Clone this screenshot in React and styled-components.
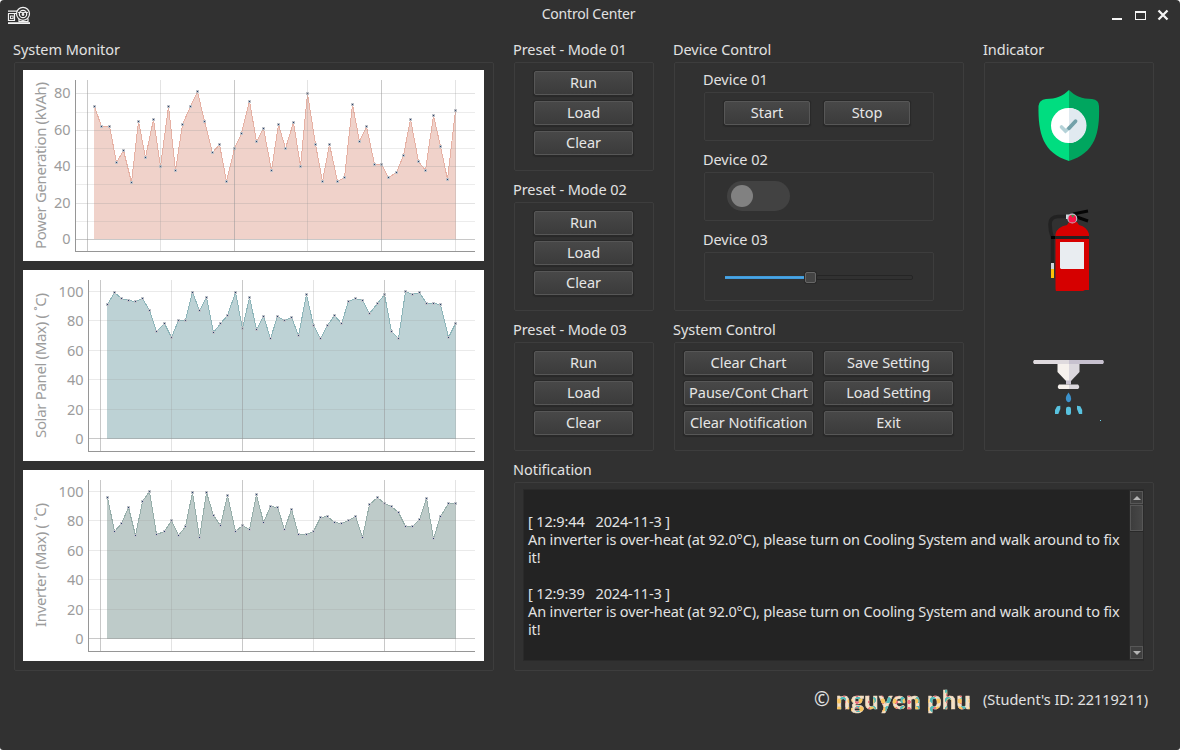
import React from "react";
import styled, { createGlobalStyle } from "styled-components";

const GlobalStyle = createGlobalStyle`
  * { box-sizing: border-box; }
  body {
    margin: 0;
    background: #fff;
    overflow: hidden;
    font-family: "Noto Sans", "Open Sans", sans-serif;
    font-size: 14.5px;
    color: #e2e2e2;
  }
`;

const Window = styled.div`
  width: 1180px;
  height: 750px;
  background: #313131;
  border-radius: 4px 4px 3px 3px;
  display: flex;
  flex-direction: column;
`;

const TitleBar = styled.header`
  height: 31px;
  flex: none;
  display: grid;
  grid-template-columns: 60px 1fr 60px;
  padding: 0 10px 0 7px;
`;

const AppIcon = styled.svg`
  width: 24px;
  height: 20px;
  margin-top: 6px;
`;

const Title = styled.div`
  text-align: center;
  line-height: 28px;
  font-size: 14px;
  letter-spacing: -0.2px;
`;

const WindowButtons = styled.svg`
  width: 60px;
  height: 31px;
`;

const Main = styled.main`
  display: grid;
  grid-template-columns: 480px 640px;
  column-gap: 20px;
  padding: 0 0 0 14px;
`;

const Column = styled.div`
  display: flex;
  flex-direction: column;
`;

const TopRow = styled.div`
  display: grid;
  grid-template-columns: 140px 290px 170px;
  column-gap: 20px;
`;

const Group = styled.section`
  display: flex;
  flex-direction: column;
`;

const GroupLabel = styled.h2`
  margin: 0 0 0 -1px;
  height: ${(p) => (p.$tight ? 29 : 31)}px;
  padding-top: ${(p) => (p.$tight ? 4 : 6)}px;
  line-height: 24px;
  font-size: 14.5px;
  font-weight: 400;
  white-space: nowrap;
  letter-spacing: -0.05px;
`;

const GroupBox = styled.div`
  height: ${(p) => p.$h}px;
  border: 1px solid #3d3d3d;
  border-radius: 2px;
  padding: ${(p) => p.$pad || "0"};
`;

const ChartStack = styled(GroupBox)`
  display: flex;
  flex-direction: column;
  gap: 9px;
`;

const ChartSvg = styled.svg`
  display: block;
  width: 461px;
  height: 191px;
  background: #fff;
  font-size: 15px;
  fill: #9c9c9c;
`;

const ButtonStack = styled(GroupBox)`
  display: grid;
  grid-template-columns: ${(p) => p.$cols};
  grid-auto-rows: 24px;
  gap: 6px ${(p) => p.$gap || 0}px;
  align-content: start;
`;

const Button = styled.button`
  padding: 0 0 2px;
  border: 1px solid #575757;
  border-radius: 2px;
  background: linear-gradient(#484848, #3b3b3b);
  box-shadow: 0 0 0 1px #292929, 0 1px 1px 1px #292929;
  color: #e6e6e6;
  font: inherit;
  line-height: 20px;
  white-space: nowrap;
  letter-spacing: -0.06px;
`;

const Track = styled.div`
  width: 63px;
  height: 30px;
  border-radius: 15px;
  background: #424242;
  padding: 4px;
`;

const Knob = styled.div`
  width: 22px;
  height: 22px;
  border-radius: 50%;
  background: #818181;
`;

const Slider = styled.div`
  display: flex;
  align-items: center;
  height: 11px;
`;

const SliderFill = styled.div`
  width: 80px;
  height: 3px;
  background: #4ba6e4;
  border-top: 1px solid #419bdb;
  border-bottom: 1px solid #419bdb;
`;

const SliderHandle = styled.div`
  width: 11px;
  height: 11px;
  border: 1px solid #676767;
  border-radius: 2px;
  background: #444;
  box-shadow: 0 0 0 1px #292929;
`;

const SliderRest = styled.div`
  width: 97px;
  height: 5px;
  border: 1px solid #252525;
  border-radius: 2px;
`;

const IndicatorBox = styled(GroupBox)`
  svg { display: block; width: 168px; height: 387px; }
`;

const LogFrame = styled.div`
  display: flex;
  height: 172px;
  background: #232323;
  border: 1px solid #2a2a2a;
`;

const LogText = styled.div`
  flex: 1;
  min-width: 0;
  overflow: hidden;
  padding: 4px 0 0 4px;
`;

const Line = styled.div`
  height: 18px;
  line-height: 18px;
  white-space: pre;
  letter-spacing: -0.135px;
  margin-top: ${(p) => p.$up || 0}px;
`;

const Scroll = styled.div`
  width: 14px;
  flex: none;
  display: flex;
  flex-direction: column;
  background: #383838;
  border: 1px solid #292929;
  border-right: 0;
`;

const Arrow = styled.div`
  height: 13px;
  border: 1px solid #575757;
  background: #3f3f3f;
  display: flex;
  align-items: center;
  justify-content: center;
  &::after {
    content: "";
    border: 4px solid transparent;
    border-top-width: ${(p) => (p.$up ? 0 : 4)}px;
    border-bottom-width: ${(p) => (p.$up ? 4 : 0)}px;
    border-top-color: ${(p) => (p.$up ? "transparent" : "#b4b4b4")};
    border-bottom-color: ${(p) => (p.$up ? "#b4b4b4" : "transparent")};
  }
`;

const Thumb = styled.div`
  height: 26px;
  margin: 1px 0 auto;
  border: 1px solid #575757;
  background: linear-gradient(90deg, #3d3d3d, #474747);
  box-shadow: 0 1px 0 #292929;
`;

const Footer = styled.footer`
  display: flex;
  align-items: center;
  height: 55px;
  padding-left: 814px;
`;

const Copyright = styled.span`
  font-size: 19px;
  width: 22px;
`;

const Signature = styled.span`
  width: 147px;
  font-family: Lato, sans-serif;
  font-weight: 900;
  font-size: 25px;
  line-height: 34px;
  white-space: pre;
  letter-spacing: 0.45px;
  color: transparent;
  -webkit-text-stroke: 0.6px transparent;
  background:
    radial-gradient(circle at 3px 3px, #fbc55e 2.2px, transparent 2.8px) 0 0 / 11px 8px,
    radial-gradient(circle at 3px 3px, #ee6f7d 1.6px, transparent 2.2px) 5px 3px / 13px 7px,
    radial-gradient(circle at 4px 4px, #4fb9b8 2.8px, transparent 3.4px) 3px 5px / 15px 9px,
    #f3dfc6;
  -webkit-background-clip: text;
  background-clip: text;
`;

const StudentId = styled.span`
  font-size: 14.5px;
  white-space: nowrap;
  letter-spacing: -0.02px;
`;

const charts = [
  {
    label: "Power Generation (kVAh)", top: 12, length: 167, axis: 52.5, x0: 64.05, step: 7.362,
    zero: 169.4, unit: 1.82, bottom: 181.5, major: [80, 60, 40, 20, 0], minor: [70, 50, 30, 10],
    fill: "#f0d2ca", line: "#e6b1a4",
    data: [73, 62, 62, 42, 49, 31, 65, 45, 66, 40, 73, 38, 63, 73, 81, 65, 48, 52, 32, 50, 58, 76, 54, 61, 38, 63, 50, 64, 40, 80, 52, 32, 52, 32, 34, 74, 54, 62, 41, 41, 34, 37, 46, 66, 43, 38, 68, 51, 33, 71],
  },
  {
    label: "Solar Panel (Max) ( ˚C)", top: 23, length: 145, axis: 65.5, x0: 77.1, step: 7.1,
    zero: 168.5, unit: 1.47, bottom: 181.5, major: [100, 80, 60, 40, 20, 0], minor: [],
    fill: "#bdd2d5", line: "#8db5b9",
    data: [91, 99, 95, 94, 93, 95, 87, 73, 78, 69, 80, 80, 99, 87, 96, 72, 78, 84, 99, 75, 96, 74, 83, 68, 83, 80, 82, 70, 98, 77, 68, 77, 84, 78, 93, 95, 94, 85, 92, 98, 73, 68, 100, 98, 99, 92, 92, 91, 69, 78],
  },
  {
    label: "Inverter (Max) ( ˚C)", top: 33, length: 124, axis: 65.5, x0: 77.1, step: 7.1,
    zero: 168.5, unit: 1.47, bottom: 181.5, major: [100, 80, 60, 40, 20, 0], minor: [],
    fill: "#becbc9", line: "#96aeaa",
    data: [96, 73, 78, 89, 70, 93, 100, 71, 73, 80, 70, 76, 99, 69, 99, 84, 77, 97, 73, 77, 74, 98, 79, 90, 89, 74, 88, 71, 71, 73, 82, 83, 79, 78, 80, 83, 69, 91, 96, 92, 90, 86, 76, 76, 81, 95, 68, 83, 92, 92],
  },
];

function Chart({ c }) {
  const snap = (v) => Math.floor(v) + 0.5;
  const px = (i) => snap(c.x0 + c.step * i);
  const py = (v) => snap(c.zero - c.unit * v);
  const pts = c.data.map((v, i) => [px(i + 1), py(v)]);
  const path = pts.map((p) => p.join(",")).join(" ");
  const left = pts[0][0] - 0.5;
  return (
    <ChartSvg viewBox="0 0 461 191">
      <polygon points={`${left},${c.zero} ${left},${pts[0][1]} ${path} ${pts[49][0]},${c.zero}`} fill={c.fill} shapeRendering="crispEdges" />
      <polyline points={path} fill="none" stroke={c.line} shapeRendering="crispEdges" />
      {pts.map(([x, y], i) => (
        <g key={i} shapeRendering="crispEdges">
          <rect x={x - 1.5} y={y - 1.5} width="3" height="3" fill="#bfc2c8" />
          <rect x={x - 0.5} y={y - 0.5} width="1" height="1" fill="#27406a" />
        </g>
      ))}
      <g stroke="#969696" shapeRendering="crispEdges">
        {[0, 10, 20, 30, 40, 50].map((i) => (
          <line key={i} x1={px(i)} x2={px(i)} y1="10" y2={c.bottom} strokeOpacity={i % 20 ? 0.27 : 0.52} />
        ))}
        {c.major.map((v) => (
          <line key={v} x1={c.axis} x2="452" y1={py(v)} y2={py(v)} strokeOpacity={v === 0 ? 0.52 : c.minor.length ? 0.27 : 0.2} />
        ))}
        {c.minor.map((v) => (
          <line key={v} x1={c.axis} x2="452" y1={py(v)} y2={py(v)} strokeOpacity="0.18" />
        ))}
        <path d={`M${c.axis} 10V${c.bottom}H452`} fill="none" />
      </g>
      {c.major.map((v) => (
        <text key={v} x={c.axis - 5} y={py(v) + (c.minor.length ? 4.4 : 5)} textAnchor="end" fontSize="14.5">{v}</text>
      ))}
      <text transform={`translate(23 ${c.top + c.length}) rotate(-90)`} textLength={c.length}>{c.label}</text>
    </ChartSvg>
  );
}

function Indicators() {
  return (
    <svg viewBox="985 63 168 387">
      <path d="M1069 90C1063 96 1056 99 1046 99Q1039 100 1038.500 106C1038 133 1043 153 1069 161Z" fill="#00dd80" />
      <path d="M1069 90C1075 96 1082 99 1092 99Q1099 100 1099 106C1100 133 1095 153 1069 161Z" fill="#00a65f" />
      <circle cx="1068.5" cy="125.500" r="17.500" fill="#fff" />
      <path d="M1069 108A17.500 17.500 0 0 1 1069 143Z" fill="#e1eaf0" />
      <path d="M1061.500 127L1065.500 131L1069 128" fill="none" stroke="#b5d2d8" strokeWidth="3.600" strokeLinecap="round" />
      <path d="M1069 128.200L1075.500 121.200" fill="none" stroke="#72a1a9" strokeWidth="3.800" strokeLinecap="round" />

      <path d="M1073 214L1088 211M1074 216L1088 221" stroke="#050505" strokeWidth="3" />
      <path d="M1067 216.500H1058Q1050 217 1050 224Q1050 231 1052.500 238V264" fill="none" stroke="#222" strokeWidth="3.600" />
      <path d="M1056 291Q1055.500 290 1055.500 288V234Q1057 227 1067 225L1069 222H1077L1079 225Q1087 227 1089 234V290H1085L1083 291H1060Z" fill="#d60000" />
      <path d="M1051 236H1089V239H1051Z" fill="#222" />
      <path d="M1051 236h4v3h-4z" fill="#000" />
      <path d="M1060 242H1084V269H1061L1060 268Z" fill="#e9edf1" />
      <path d="M1051 263h3v6h-3z" fill="#cfd5dd" />
      <path d="M1051 269h3v9h-3z" fill="#fdc00b" />
      <path d="M1066 214.500h4v4.500h-4z" fill="#cfd8df" />
      <circle cx="1072.300" cy="218.500" r="5" fill="#b9c4cc" />
      <circle cx="1072.300" cy="218.700" r="3.900" fill="#fb1446" />
      <path d="M1071 215h3l-1 3z" fill="#3a9a48" />

      <path d="M1034 360H1069V364H1034L1033 362Z" fill="#dfdade" />
      <path d="M1069 360H1103L1104 362L1103 364H1069Z" fill="#c7c1cf" />
      <path d="M1057.500 364V372L1067 382H1069V364Z" fill="#f6f1ed" />
      <path d="M1069 364H1079.500V372L1071 381L1069 382Z" fill="#dbd7dd" />
      <path d="M1066 380.500h5v4h-5z" fill="#c7c1cf" />
      <path d="M1059 384.500H1069V389H1059Q1056.500 387 1059 384.500Z" fill="#f6f1ed" />
      <path d="M1069 384.500H1078Q1080.500 387 1078 389H1069Z" fill="#dbd7dd" />
      <path d="M1068.500 392.500Q1071.300 396 1071.200 399Q1070.500 402.200 1068.500 402.200Q1066 402 1065.800 398Q1066 396 1068.500 392.500Z" fill="#3b92cd" />
      <rect x="1066" y="406.800" width="5" height="8.200" rx="2" fill="#58c2df" />
      <path d="M1057 406.200L1060.300 405.800V409L1058.300 414H1055V410Z" fill="#58c2df" />
      <path d="M1080.300 406.200L1077 405.800V409L1079 414H1082.200V410Z" fill="#58c2df" />
      <rect x="1100" y="420" width="1" height="1" fill="#6fd6ee" />
    </svg>
  );
}

const message = "An inverter is over-heat (at 92.0°C), please turn on Cooling System and walk around to fix";

export default function App() {
  return (
    <>
      <GlobalStyle />
      <Window>
        <TitleBar>
          <AppIcon viewBox="7 6 24 20" fill="none" stroke="#f2f2f2" strokeWidth="1.200">
            <circle cx="23" cy="13.800" r="6.500" />
            <circle cx="23" cy="14" r="3.700" />
            <path d="M8 11.200H17M8 13.500H16M8.500 13.500V21M14.500 14V20.500M8.500 20.500H15M19 19V21.500H28V18.500" />
            <path d="M18 12.500H28" strokeWidth="0.900" />
            <rect x="10.500" y="16" width="2.600" height="2.600" strokeWidth="1" />
            <circle cx="23" cy="14.500" r="0.800" fill="#f2f2f2" />
            <path d="M8 23.100H30" strokeWidth="1.800" />
          </AppIcon>
          <Title>Control Center</Title>
          <WindowButtons viewBox="1110 0 60 31">
            <path d="M1112 18h10v2h-10z" fill="#f4f4f4" />
            <path d="M1135 11h11v9h-11z M1136 13v6h9v-6z" fill="#f4f4f4" fillRule="evenodd" />
            <path d="M1158.500 10.500L1167.500 19.500M1167.500 10.500L1158.500 19.500" stroke="#f4f4f4" strokeWidth="2.300" />
          </WindowButtons>
        </TitleBar>

        <Main>
          <Group>
            <GroupLabel>System Monitor</GroupLabel>
            <ChartStack $h={609} $pad="7px 8px">
              {charts.map((c) => <Chart key={c.label} c={c} />)}
            </ChartStack>
          </Group>

          <Column>
            <TopRow>
              <Column>
                {["01", "02", "03"].map((n) => (
                  <Group key={n}>
                    <GroupLabel>Preset - Mode {n}</GroupLabel>
                    <ButtonStack $h={109} $pad="8px 19px" $cols="99px">
                      <Button>Run</Button>
                      <Button>Load</Button>
                      <Button>Clear</Button>
                    </ButtonStack>
                  </Group>
                ))}
              </Column>

              <Column>
                <Group>
                  <GroupLabel>Device Control</GroupLabel>
                  <GroupBox $h={249} $pad="0 29px">
                    <GroupLabel as="h3" $tight>Device 01</GroupLabel>
                    <ButtonStack $h={49} $pad="8px 19px" $cols="86px 86px" $gap={14}>
                      <Button>Start</Button>
                      <Button>Stop</Button>
                    </ButtonStack>
                    <GroupLabel as="h3">Device 02</GroupLabel>
                    <GroupBox $h={49} $pad="8px 22px">
                      <Track><Knob /></Track>
                    </GroupBox>
                    <GroupLabel as="h3">Device 03</GroupLabel>
                    <GroupBox $h={49} $pad="19px 20px">
                      <Slider><SliderFill /><SliderHandle /><SliderRest /></Slider>
                    </GroupBox>
                  </GroupBox>
                </Group>
                <Group>
                  <GroupLabel>System Control</GroupLabel>
                  <ButtonStack $h={109} $pad="8px 9px" $cols="129px 129px" $gap={11}>
                    <Button>Clear Chart</Button>
                    <Button>Save Setting</Button>
                    <Button>Pause/Cont Chart</Button>
                    <Button>Load Setting</Button>
                    <Button>Clear Notification</Button>
                    <Button>Exit</Button>
                  </ButtonStack>
                </Group>
              </Column>

              <Group>
                <GroupLabel>Indicator</GroupLabel>
                <IndicatorBox $h={389}><Indicators /></IndicatorBox>
              </Group>
            </TopRow>

            <Group>
              <GroupLabel>Notification</GroupLabel>
              <GroupBox $h={189} $pad="6px 9px 0 8px">
                <LogFrame>
                  <LogText>
                    <Line> </Line>
                    <Line>{"[ 12:9:44   2024-11-3 ]"}</Line>
                    <Line>{message}</Line>
                    <Line>it!</Line>
                    <Line> </Line>
                    <Line>{"[ 12:9:39   2024-11-3 ]"}</Line>
                    <Line>{message}</Line>
                    <Line>it!</Line>
                    <Line> </Line>
                    <Line $up={-1}>{"[ 12:9:34   2024-11-3 ]"}</Line>
                  </LogText>
                  <Scroll>
                    <Arrow $up />
                    <Thumb />
                    <Arrow />
                  </Scroll>
                </LogFrame>
              </GroupBox>
            </Group>
          </Column>
        </Main>

        <Footer>
          <Copyright>©</Copyright>
          <Signature>nguyen phu</Signature>
          <StudentId>(Student's ID: 22119211)</StudentId>
        </Footer>
      </Window>
    </>
  );
}
